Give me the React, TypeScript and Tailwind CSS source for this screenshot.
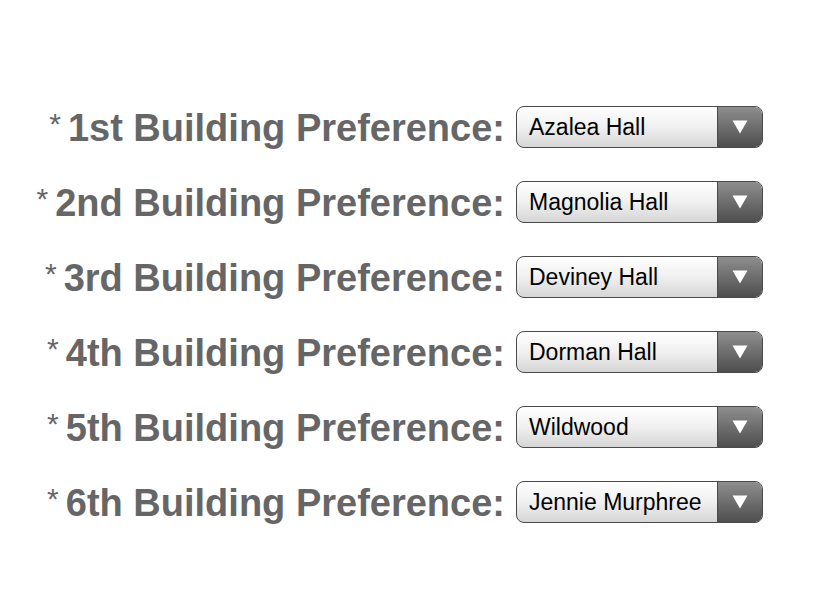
const buildings = ['Azalea Hall', 'Magnolia Hall', 'Deviney Hall', 'Dorman Hall', 'Wildwood', 'Jennie Murphree']
const ordinals = ['1st', '2nd', '3rd', '4th', '5th', '6th']

export default function App() {
  return (
    <div className="min-h-[614px] w-[828px] bg-white pt-[106px] font-['Liberation_Sans',Arial,sans-serif]">
      <div className="grid grid-cols-[505px_247px] gap-x-[11px] gap-y-[33px]">
        {ordinals.map((o, i) => (
          <div key={o} className="contents">
            <div className="flex h-[42px] items-center justify-end whitespace-nowrap text-[#666666]">
              <span className="mr-[7px] -mt-[6px] text-[30px] leading-none">*</span>
              <span className="pt-[2px] text-[38px] font-bold leading-none">{o} Building Preference:</span>
            </div>
            <div className="flex h-[42px] overflow-hidden rounded-[8px] border-[1.5px] border-[#4a4a4a] bg-gradient-to-b from-white via-[#f0f0f0] to-[#d6d6d6]">
              <div className="flex flex-1 items-center pl-[12px] pt-[1px] text-[23px] leading-none text-black">
                {buildings[i]}
              </div>
              <div className="flex w-[45px] items-center justify-center border-l-[1.5px] border-[#4a4a4a] bg-gradient-to-b from-[#8e8e8e] via-[#6e6e6e] to-[#4e4e4e]">
                <svg width="16" height="14" viewBox="0 0 16 14">
                  <path d="M0.5 0.5 H15.5 L8 13.5 Z" fill="#fff" />
                </svg>
              </div>
            </div>
          </div>
        ))}
      </div>
    </div>
  )
}
